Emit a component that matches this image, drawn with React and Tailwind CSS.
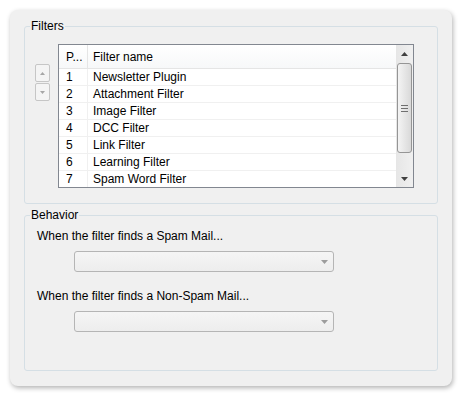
import React from 'react';

const filters = [
  'Newsletter Plugin',
  'Attachment Filter',
  'Image Filter',
  'DCC Filter',
  'Link Filter',
  'Learning Filter',
  'Spam Word Filter',
];

function Arrow({ dir = 'down', color = '#404040', w = 7, h = 4 }) {
  const points = dir === 'up' ? `0,${h} ${w},${h} ${w / 2},0` : `0,0 ${w},0 ${w / 2},${h}`;
  return (
    <svg width={w} height={h} viewBox={`0 0 ${w} ${h}`} className="block">
      <polygon points={points} fill={color} />
    </svg>
  );
}

function ComboBox() {
  return (
    <div className="ml-[37px] mt-[8px] w-[260px] h-[21px] border border-[#b5b5b5] rounded-[3px] bg-gradient-to-b from-[#f5f5f5] to-[#ededed] flex justify-end">
      <div className="w-[17px] h-full flex items-center justify-center">
        <Arrow color="#9c9c9c" />
      </div>
    </div>
  );
}

function ScrollBar() {
  return (
    <div className="w-[17px] h-full flex flex-col bg-gradient-to-r from-[#e6e6e6] to-[#f0f0f0]">
      <div className="h-[17px] flex items-center justify-center">
        <Arrow dir="up" />
      </div>
      <div className="flex-1 px-[1px] pt-[1px]">
        <div className="h-[90px] rounded-[3px] border border-[#959595] bg-gradient-to-r from-[#f4f4f4] to-[#d9d9d9] flex flex-col items-center justify-center gap-[2px]">
          <div className="w-[7px] h-[1px] bg-[#6f6f6f]" />
          <div className="w-[7px] h-[1px] bg-[#6f6f6f]" />
          <div className="w-[7px] h-[1px] bg-[#6f6f6f]" />
        </div>
      </div>
      <div className="h-[17px] flex items-center justify-center">
        <Arrow dir="down" />
      </div>
    </div>
  );
}

function FilterList() {
  return (
    <div className="w-[356px] h-[144px] border border-[#828790] bg-white flex overflow-hidden">
      <div className="flex-1 flex flex-col overflow-hidden">
        <div className="h-[24px] shrink-0 flex border-b border-[#e5e5e5] bg-gradient-to-b from-white to-[#f7f8f9]">
          <div className="w-[29px] pl-[7px] border-r border-[#e5e5e5] flex items-center">P...</div>
          <div className="flex-1 pl-[5px] flex items-center">Filter name</div>
        </div>
        {filters.map((name, i) => (
          <div key={name} className="h-[17px] shrink-0 flex border-b border-[#f0f0f0]">
            <div className="w-[29px] pl-[7px] border-r border-[#f0f0f0] flex items-center">{i + 1}</div>
            <div className="flex-1 pl-[5px] flex items-center">{name}</div>
          </div>
        ))}
      </div>
      <ScrollBar />
    </div>
  );
}

function MoveButton({ dir }) {
  return (
    <div className="w-[15px] h-[18px] border border-[#c6c6c6] rounded-[2px] bg-[#f4f4f4] flex items-center justify-center">
      <Arrow dir={dir} color="#a6a6a6" w={5} h={3} />
    </div>
  );
}

export default function App() {
  return (
    <div
      className="w-[462px] h-[396px] bg-white p-[10px] text-[12px] leading-[14px] text-black"
      style={{ fontFamily: '"Liberation Sans", Arial, sans-serif' }}
    >
      <div className="w-[442px] h-[376px] rounded-[8px] bg-[#f0f0f0] shadow-[1px_2px_5px_rgba(0,0,0,0.3)] pt-[9px] px-[14px] flex flex-col">
        <fieldset className="h-[185px] border border-[#d5dfe5] rounded-[3px]">
          <legend className="ml-[5px] px-[1px] leading-[14px]">Filters</legend>
          <div className="flex gap-[8px] pl-[10px] pt-[11px]">
            <div className="flex flex-col gap-[1px] pt-[20px]">
              <MoveButton dir="up" />
              <MoveButton dir="down" />
            </div>
            <FilterList />
          </div>
        </fieldset>

        <fieldset className="mt-[4px] h-[163px] border border-[#d5dfe5] rounded-[3px]">
          <legend className="ml-[5px] px-[1px] leading-[14px]">Behavior</legend>
          <div className="flex flex-col pl-[12px] pt-[7px]">
            <div>When the filter finds a Spam Mail...</div>
            <ComboBox />
            <div className="mt-[17px]">When the filter finds a Non-Spam Mail...</div>
            <ComboBox />
          </div>
        </fieldset>
      </div>
    </div>
  );
}
